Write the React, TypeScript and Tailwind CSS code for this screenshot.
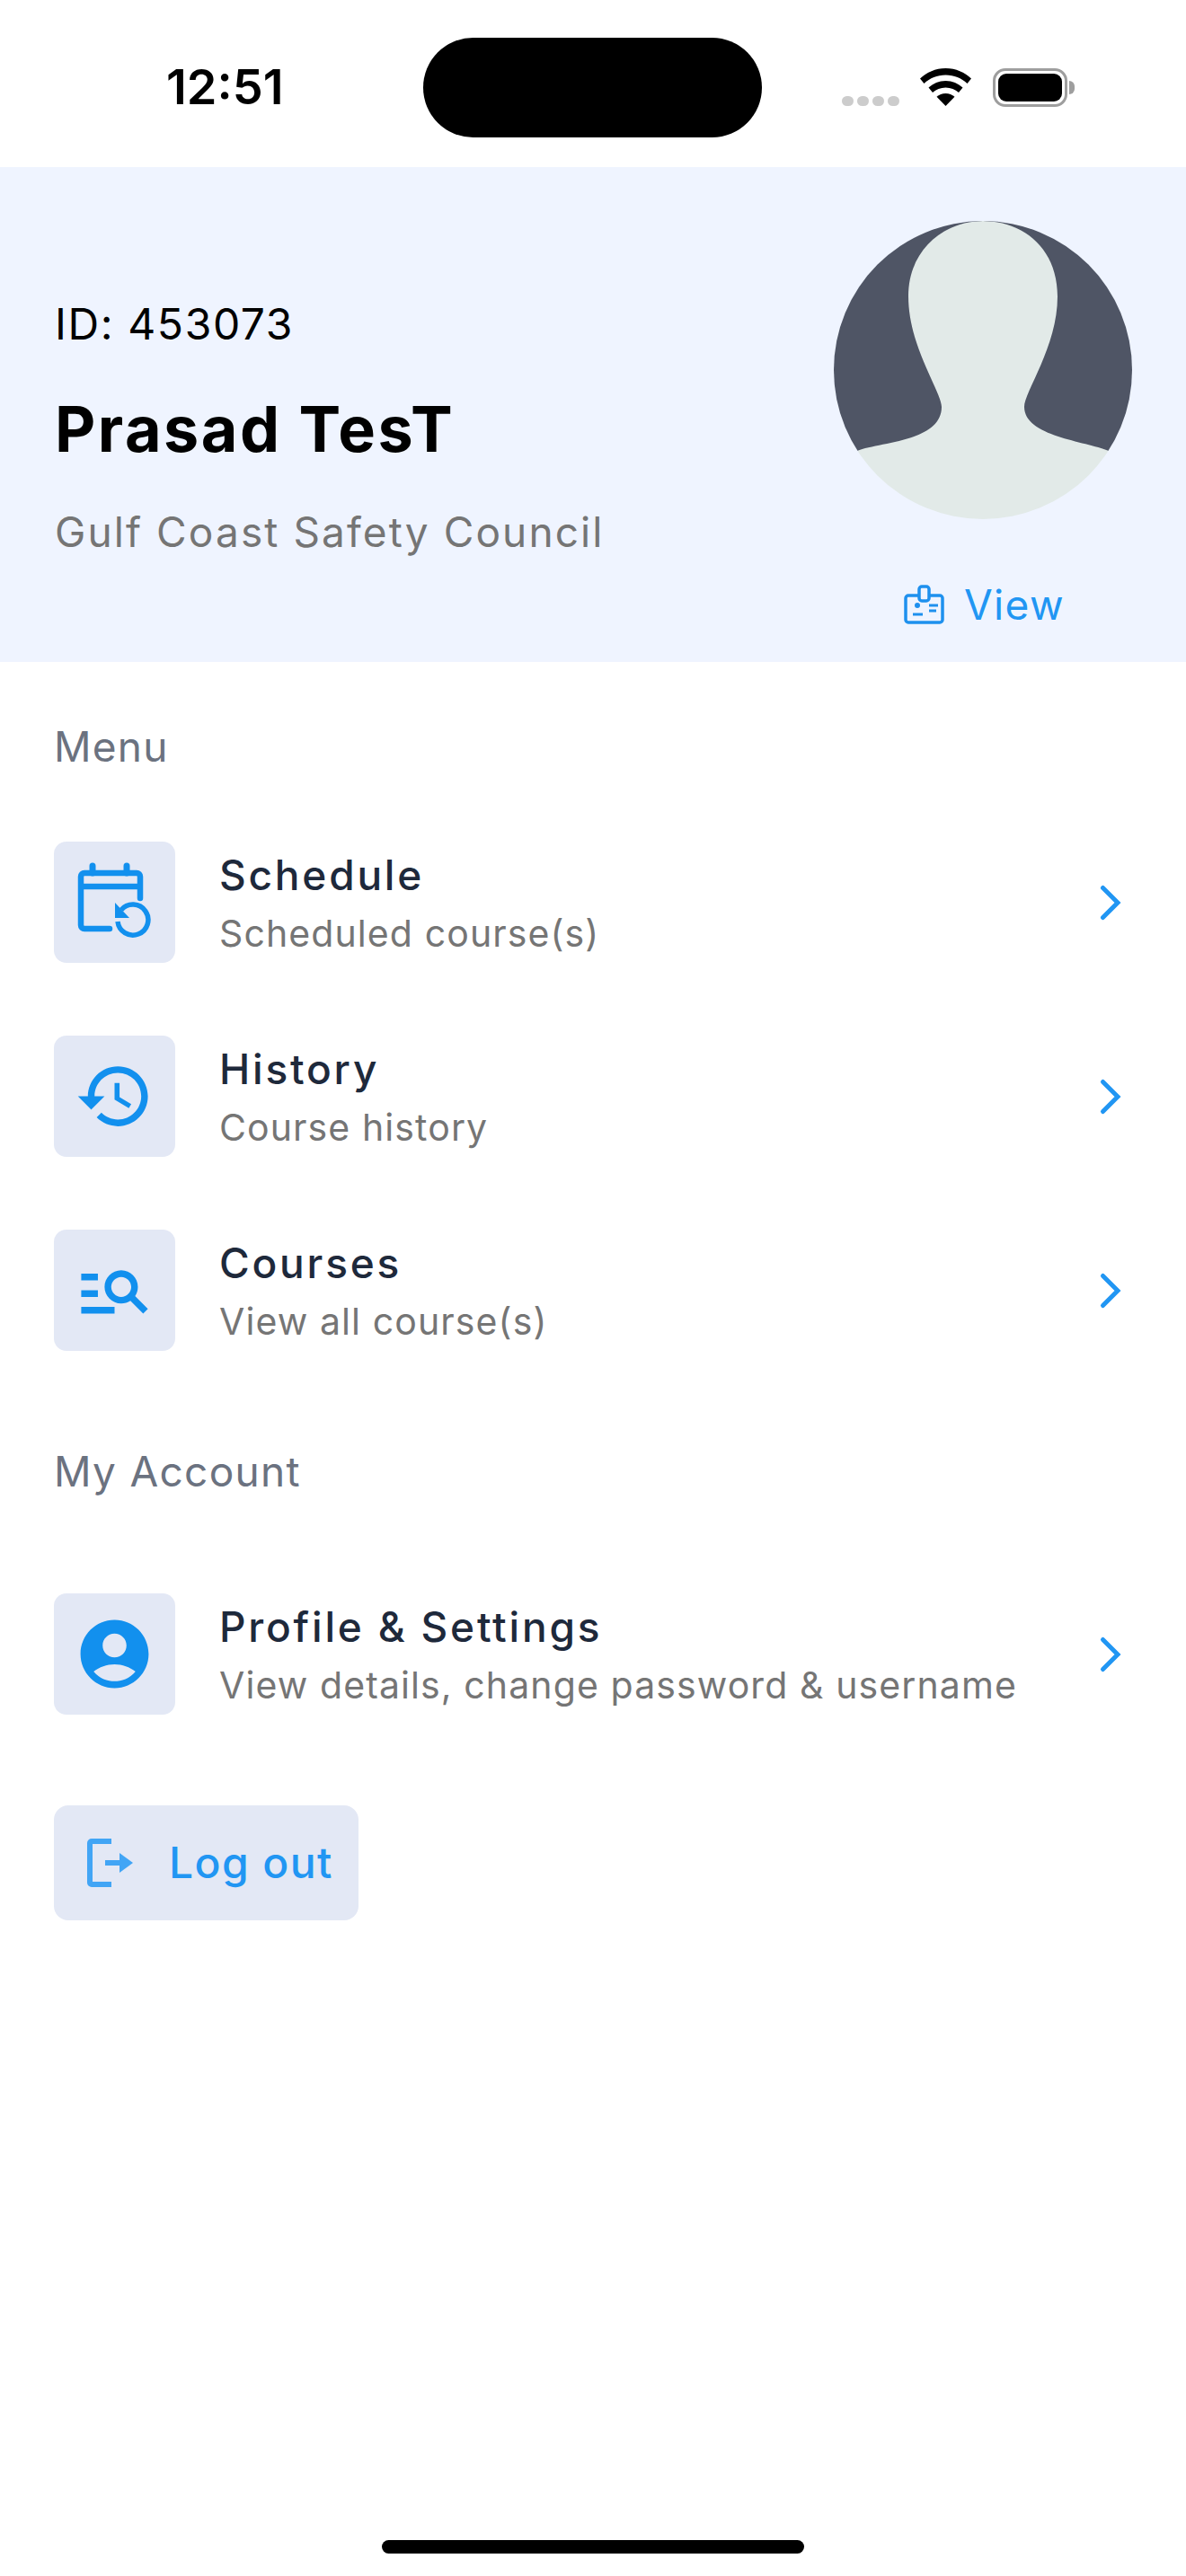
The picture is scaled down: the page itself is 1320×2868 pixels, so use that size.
import React from "react";

const blue = "#1290EE";

const ScheduleIcon = () => (
  <svg className="blur-[0.6px]" width="135" height="135" viewBox="0 0 135 135" fill="none" stroke={blue} strokeWidth="6.5">
    <path d="M62 97H34a4 4 0 0 1-4-4V39a4 4 0 0 1 4-4h58a4 4 0 0 1 4 4v24" strokeLinecap="round" />
    <path d="M30 50h66" />
    <path d="M43 27v8M81 27v8" strokeWidth="7" strokeLinecap="round" />
    <path d="M75 76a17 17 0 1 1-4 13" strokeWidth="5.5" />
    <path d="M68 68l0 17h16z" fill={blue} stroke="none" />
  </svg>
);

const HistoryIcon = () => (
  <svg className="blur-[0.6px]" width="89" height="89" viewBox="0 0 24 24" fill={blue}>
    <path d="M13 3c-4.97 0-9 4.03-9 9H1l3.89 3.89.07.14L9 12H6c0-3.87 3.13-7 7-7s7 3.13 7 7-3.13 7-7 7c-1.93 0-3.68-.79-4.94-2.06l-1.42 1.42C8.27 19.99 10.51 21 13 21c4.97 0 9-4.03 9-9s-4.03-9-9-9zm-1 5v5l4.28 2.54.72-1.21-3.5-2.08V8H12z" />
  </svg>
);

const CoursesIcon = () => (
  <svg className="blur-[0.6px]" width="89" height="89" viewBox="0 0 24 24" fill={blue}>
    <path d="M7 9H2V7h5v2zm0 3H2v2h5v-2zm13.59 7-3.83-3.83c-.8.52-1.74.83-2.76.83-2.76 0-5-2.24-5-5s2.24-5 5-5 5 2.24 5 5c0 1.02-.31 1.96-.83 2.75L22 17.59 20.59 19zM17 11c0-1.65-1.35-3-3-3s-3 1.35-3 3 1.35 3 3 3 3-1.35 3-3zM2 19h10v-2H2v2z" />
  </svg>
);

const ProfileIcon = () => (
  <svg className="blur-[0.6px]" width="91" height="91" viewBox="0 0 24 24" fill={blue}>
    <path d="M12 2C6.48 2 2 6.48 2 12s4.48 10 10 10 10-4.48 10-10S17.52 2 12 2zm0 4c1.93 0 3.5 1.57 3.5 3.5S13.93 13 12 13s-3.5-1.57-3.5-3.5S10.07 6 12 6zm0 14c-2.03 0-4.43-.82-6.14-2.88C7.55 15.8 9.68 15 12 15s4.45.8 6.14 2.12C16.43 19.18 14.03 20 12 20z" />
  </svg>
);

const menu = [
  { title: "Schedule", sub: "Scheduled course(s)", icon: <ScheduleIcon /> },
  { title: "History", sub: "Course history", icon: <HistoryIcon /> },
  { title: "Courses", sub: "View all course(s)", icon: <CoursesIcon /> },
];

const Row = ({ title, sub, icon }: { title: string; sub: string; icon: React.ReactNode }) => (
  <div className="flex items-center h-[135px]">
    <div className="flex items-center justify-center w-[135px] h-[135px] rounded-[14px] bg-[#E3E8F5] shrink-0">{icon}</div>
    <div className="ml-[49px] flex-1">
      <div className="text-[46px] leading-[57px] font-medium tracking-[2.8px] text-[#1E293B]">{title}</div>
      <div className="text-[41px] leading-[50px] mt-[11px] tracking-[1.1px] text-[#757575]">{sub}</div>
    </div>
    <svg className="mr-[8px]" width="30" height="44" viewBox="0 0 30 44" fill="none" stroke="#2196F3" strokeWidth="5" strokeLinecap="round">
      <path d="M5.5 5.5L22 22L5.5 38.5" />
    </svg>
  </div>
);

export default function App() {
  return (
    <div className="flex flex-col min-h-[2868px] bg-white font-['Inter',sans-serif]">
      <div className="flex items-center h-[186px] pt-[8px] shrink-0">
        <div className="ml-[185px] w-[130px] text-[54px] leading-[54px] font-semibold text-black">12:51</div>
        <div className="ml-[156px] w-[377px] h-[111px] rounded-full bg-black"></div>
        <div className="ml-[89px] flex items-end gap-[4px] h-[42px]">
          <span className="w-[13px] h-[11px] rounded-full bg-[#CCCCCC]"></span>
          <span className="w-[13px] h-[11px] rounded-full bg-[#CCCCCC]"></span>
          <span className="w-[13px] h-[11px] rounded-full bg-[#CCCCCC]"></span>
          <span className="w-[13px] h-[11px] rounded-full bg-[#CCCCCC]"></span>
        </div>
        <svg className="ml-[23px]" width="57" height="42" viewBox="0 0 57 42" fill="#000">
          <path d="M28.5 0C17 0 7.5 4.5 0 11.5l4.5 5.5C11 11 19 7.5 28.5 7.5S46 11 52.5 17L57 11.5C49.5 4.5 40 0 28.5 0z" />
          <path d="M28.5 14C21 14 14.5 17 9.5 21.5L14 27c3.8-3.4 8.8-5.5 14.5-5.5S39.2 23.6 43 27l4.5-5.5C42.5 17 36 14 28.5 14z" />
          <path d="M28.5 28c-3.8 0-7.3 1.5-10 3.8L28.5 42l10-10.2c-2.7-2.3-6.2-3.8-10-3.8z" />
        </svg>
        <div className="ml-[24px] flex items-center">
          <div className="w-[83px] h-[43px] rounded-[14px] border-[3px] border-[#9E9E9E] p-[3px]">
            <div className="w-full h-full rounded-[9px] bg-black"></div>
          </div>
          <div className="ml-[2px] w-[6px] h-[15px] rounded-r-full bg-[#9E9E9E]"></div>
        </div>
      </div>

      <div className="flex justify-between h-[551px] shrink-0 bg-[#EFF4FF] pl-[61px] pr-[60px] pt-[60px]">
        <div>
          <div className="mt-[86px] text-[48px] leading-[58px] tracking-[1.6px] text-black">ID: 453073</div>
          <div className="mt-[46px] text-[70px] leading-[84px] font-bold tracking-[2.5px] text-black">Prasad TesT</div>
          <div className="mt-[43px] text-[46px] leading-[58px] tracking-[2.1px] text-[#757575]">Gulf Coast Safety Council</div>
        </div>
        <div className="flex flex-col items-center w-[332px]">
          <svg className="rounded-full" width="332" height="332" viewBox="0 0 332 332">
            <rect width="332" height="256" fill="#4F5565" />
            <path
              d="M26 256C50 246 120 246 120 207C120 190 83 140 83 84C83 30 125 0 166 0C210 0 249 30 249 84C249 140 212 190 212 207C212 240 280 245 306 256L332 332H0Z"
              fill="#E2EAE8"
            />
          </svg>
          <div className="flex items-center mt-[66px] ml-[3px]">
            <svg className="blur-[0.5px]" width="46" height="44" viewBox="0 0 46 44" fill="none" stroke="#1E90EE" strokeWidth="3.5">
              <rect x="2" y="12" width="41" height="30" rx="3" />
              <rect x="17" y="2" width="11" height="16" rx="3" fill="#EFF4FF" />
              <circle cx="15" cy="23" r="3" fill="#1E90EE" stroke="none" />
              <path d="M10 33h11M28 23h10M28 29h8" strokeWidth="3" />
            </svg>
            <span className="ml-[21px] text-[46px] leading-[58px] tracking-[1.4px] text-[#2196F3]">View</span>
          </div>
        </div>
      </div>

      <div className="px-[60px]">
        <div className="mt-[65px] text-[46px] leading-[58px] tracking-[1.2px] text-[#6B7280]">Menu</div>
        <div className="mt-[77px] flex flex-col gap-[81px]">
          {menu.map((m) => (
            <Row key={m.title} {...m} />
          ))}
        </div>
        <div className="mt-[105px] text-[46px] leading-[58px] tracking-[1.3px] text-[#6B7280]">My Account</div>
        <div className="mt-[107px]">
          <Row title="Profile & Settings" sub="View details, change password & username" icon={<ProfileIcon />} />
        </div>
        <div className="mt-[101px] flex items-center w-[339px] h-[128px] rounded-[16px] bg-[#E3E8F5]">
          <svg className="ml-[37px] blur-[0.5px]" width="52" height="54" viewBox="0 0 52 54" fill="none" stroke="#42A5F5" strokeWidth="6">
            <path d="M27 3H5a2 2 0 0 0-2 2v44a2 2 0 0 0 2 2h22" />
            <path d="M20 27h18" />
            <path d="M36 16l15 11-15 11z" fill="#42A5F5" stroke="none" />
          </svg>
          <span className="ml-[39px] text-[48px] leading-[58px] font-medium tracking-[1.4px] text-[#2196F3]">Log out</span>
        </div>
      </div>

      <div className="mt-auto mb-[25px] self-center w-[470px] h-[15px] rounded-full bg-black"></div>
    </div>
  );
}
